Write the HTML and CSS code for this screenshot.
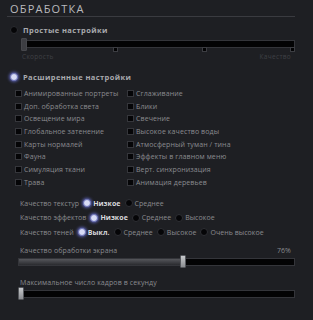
FILE: index.html
```html
<!DOCTYPE html>
<html>
<head><meta charset="utf-8"><link rel="stylesheet" href="styles.css"></head>
<body>
<div class="panel">
  <div class="title">ОБРАБОТКА</div>
  <div class="mode"><span class="radio"></span><span class="mode-label">Простые настройки</span></div>
  <div class="simple-slider">
    <div class="track"><span class="tick t1"></span><span class="tick t2"></span><span class="tick t3"></span></div>
    <span class="handle dim"></span>
  </div>
  <div class="slider-labels"><span>Скорость</span><span>Качество</span></div>
  <div class="mode adv"><span class="radio on"></span><span class="mode-label">Расширенные настройки</span></div>
  <div class="checks">
    <div class="chk"><span class="box"></span>Анимированные портреты</div>
    <div class="chk"><span class="box"></span>Сглаживание</div>
    <div class="chk"><span class="box"></span>Доп. обработка света</div>
    <div class="chk"><span class="box"></span>Блики</div>
    <div class="chk"><span class="box"></span>Освещение мира</div>
    <div class="chk"><span class="box"></span>Свечение</div>
    <div class="chk"><span class="box"></span>Глобальное затенение</div>
    <div class="chk"><span class="box"></span>Высокое качество воды</div>
    <div class="chk"><span class="box"></span>Карты нормалей</div>
    <div class="chk"><span class="box"></span>Атмосферный туман / тина</div>
    <div class="chk"><span class="box"></span>Фауна</div>
    <div class="chk"><span class="box"></span>Эффекты в главном меню</div>
    <div class="chk"><span class="box"></span>Симуляция ткани</div>
    <div class="chk"><span class="box"></span>Верт. синхронизация</div>
    <div class="chk"><span class="box"></span>Трава</div>
    <div class="chk"><span class="box"></span>Анимация деревьев</div>
  </div>
  <div class="opts">
    <div class="opt-row"><span class="opt-name">Качество текстур</span><span class="r on"></span><b>Низкое</b><span class="r"></span><span>Среднее</span></div>
    <div class="opt-row"><span class="opt-name">Качество эффектов</span><span class="r on"></span><b>Низкое</b><span class="r"></span><span>Среднее</span><span class="r"></span><span>Высокое</span></div>
    <div class="opt-row"><span class="opt-name">Качество теней</span><span class="r on"></span><b>Выкл.</b><span class="r"></span><span>Среднее</span><span class="r"></span><span>Высокое</span><span class="r"></span><span>Очень высокое</span></div>
  </div>
  <div class="sl-head"><span>Качество обработки экрана</span><span>76%</span></div>
  <div class="bar">
    <div class="fill" style="width:59%"></div>
    <span class="handle" style="left:59%"></span>
  </div>
  <div class="sl-head fps"><span>Максимальное число кадров в секунду</span></div>
  <div class="bar">
    <span class="handle" style="left:0"></span>
  </div>
</div>
</body>
</html>
```
FILE: styles.css
```css
html, body {
  margin: 0;
  padding: 0;
  background: #1e1f23;
  width: 313px;
  height: 320px;
  overflow: hidden;
}
.panel {
  font-family: "Open Sans", "DejaVu Sans", sans-serif;
  color: #8a8b8f;
  font-size: 7px;
  padding: 3px 0 0 7px;
  width: 288px;
}
.title {
  font-size: 11px;
  letter-spacing: 1.2px;
  color: #b9babd;
  padding-left: 3px;
  line-height: 12px;
  border-bottom: 1px solid #3a3b40;
  padding-bottom: 1px;
}
.mode {
  display: flex;
  align-items: center;
  margin-top: 8px;
  padding-left: 3px;
  height: 9px;
}
.mode.adv { margin-top: 11px; }
.mode-label {
  font-weight: 700;
  font-size: 7.5px;
  letter-spacing: 0.4px;
  color: #a9aaae;
  margin-left: 5px;
}
.radio {
  width: 6px;
  height: 6px;
  border-radius: 50%;
  background: #050507;
  border: 1px solid #2a2b30;
}
.radio.on, .r.on {
  background: #d8dcf6;
  border-color: #6f75b8;
  box-shadow: 0 0 3px 1px #5a60b0;
}
.simple-slider {
  position: relative;
  margin: 4px 0 0 15px;
  height: 14px;
}
.simple-slider .track {
  position: absolute;
  left: 3px;
  right: 0;
  top: 2px;
  height: 6px;
  background: #030304;
  border: 1px solid #34353a;
}
.tick {
  position: absolute;
  top: 6px;
  width: 3px;
  height: 3px;
  background: #030304;
  border: 1px solid #3c3d42;
}
.t1 { left: 87px; }
.t2 { left: 176px; }
.t3 { right: -1px; }
.handle {
  position: absolute;
  top: -2px;
  width: 4px;
  height: 11px;
  background: linear-gradient(#c7c9cc, #8b8d91);
  border: 1px solid #55575c;
  border-radius: 1px;
  transform: translateX(-1px);
}
.simple-slider .handle {
  left: 0;
  top: 0;
  background: #3d3e43;
  border-color: #46474c;
}
.slider-labels {
  display: flex;
  justify-content: space-between;
  margin: 0 4px 0 15px;
  color: #3f4045;
  font-size: 6.5px;
  letter-spacing: 0.3px;
}
.checks {
  display: grid;
  grid-template-columns: 112px 1fr;
  margin: 8px 0 0 8px;
  row-gap: 3.7px;
}
.chk {
  display: flex;
  align-items: center;
  height: 9px;
  letter-spacing: 0.1px;
  white-space: nowrap;
}
.box {
  width: 5px;
  height: 5px;
  background: #050507;
  border: 1px solid #35363b;
  margin-right: 2px;
}
.opts {
  margin: 12px 0 0 13px;
  display: flex;
  flex-direction: column;
  gap: 5.5px;
}
.opt-row {
  display: flex;
  align-items: center;
  height: 9px;
  letter-spacing: 0.05px;
  white-space: nowrap;
}
.opt-name { margin-right: 4px; }
.opt-row b {
  color: #d8d9dd;
  font-weight: 700;
  margin-right: 4px;
}
.opt-row span:not(.r):not(.opt-name) { margin-right: 4px; }
.r {
  width: 6px;
  height: 6px;
  border-radius: 50%;
  background: #050507;
  border: 1px solid #2e2f34;
  margin-right: 2px;
}
.sl-head {
  display: flex;
  justify-content: space-between;
  margin: 9px 4px 0 13px;
  letter-spacing: 0.1px;
  height: 9px;
  line-height: 9px;
}
.sl-head.fps { margin-top: 12px; }
.bar {
  position: relative;
  margin: 3px 0 0 11px;
  height: 6px;
  background: #030304;
  border: 1px solid #34353a;
}
.fill {
  position: absolute;
  left: 0;
  top: 0;
  bottom: 0;
  background: linear-gradient(#55565b, #2a2b2f);
}
.bar .handle {
  top: -4px;
}
```
